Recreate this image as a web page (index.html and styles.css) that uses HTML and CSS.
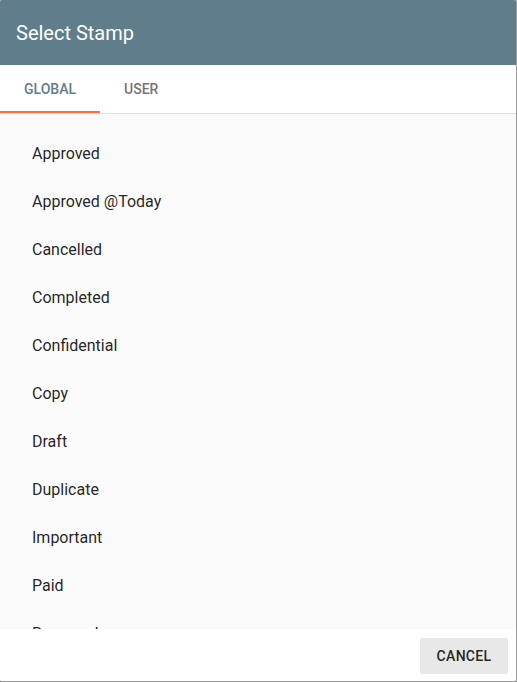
FILE: index.html
```html
<!DOCTYPE html>
<html>
<head>
<meta charset="utf-8">
<link rel="stylesheet" href="styles.css">
</head>
<body>
<div class="dialog">
  <div class="header">Select Stamp</div>
  <div class="tabs">
    <div class="tab active">GLOBAL</div>
    <div class="tab">USER</div>
  </div>
  <div class="content">
    <ul class="list">
      <li>Approved</li>
      <li>Approved @Today</li>
      <li>Cancelled</li>
      <li>Completed</li>
      <li>Confidential</li>
      <li>Copy</li>
      <li>Draft</li>
      <li>Duplicate</li>
      <li>Important</li>
      <li>Paid</li>
      <li>Removed</li>
    </ul>
  </div>
  <div class="footer">
    <button class="btn">CANCEL</button>
  </div>
</div>
</body>
</html>
```
FILE: styles.css
```css
html, body {
  margin: 0;
  padding: 0;
  background: #9a9a9a;
}
body {
  font-family: Roboto, "Liberation Sans", sans-serif;
  width: 517px;
  height: 682px;
  overflow: hidden;
}
.dialog {
  width: 516px;
  height: 681px;
  background: #fff;
  border-radius: 2px;
  overflow: hidden;
  display: flex;
  flex-direction: column;
}
.header {
  height: 65px;
  flex: none;
  background: #607d8b;
  color: #fff;
  font-size: 20px;
  line-height: 64px;
  padding-top: 1px;
  padding-left: 16px;
  box-sizing: border-box;
}
.tabs {
  display: flex;
  height: 49px;
  flex: none;
  border-bottom: 1px solid #e0e0e0;
  box-sizing: border-box;
}
.tab {
  padding: 2px 24px 0;
  font-size: 14px;
  font-weight: 500;
  color: #757575;
  line-height: 44px;
  border-bottom: 2px solid transparent;
  height: 48px;
  box-sizing: border-box;
}
.tab.active {
  color: #607d8b;
  border-bottom-color: #ff6e40;
  min-width: 100px;
}
.content {
  flex: 1;
  background: #fafafa;
  overflow: hidden;
  padding: 16px 16px 0;
  min-height: 0;
}
.list {
  list-style: none;
  margin: 0;
  padding: 0;
}
.list li {
  height: 48px;
  line-height: 48px;
  padding-left: 16px;
  font-size: 16px;
  color: rgba(0,0,0,0.87);
}
.footer {
  flex: none;
  height: 52px;
  background: #fff;
  display: flex;
  justify-content: flex-end;
  align-items: center;
  padding-right: 8px;
  padding-top: 1px;
  box-sizing: border-box;
}
.btn {
  font-family: Roboto, "Liberation Sans", sans-serif;
  background: #e8e8e8;
  border: none;
  border-radius: 2px;
  height: 36px;
  width: 88px;
  font-size: 14px;
  font-weight: 500;
  color: rgba(0,0,0,0.87);
  letter-spacing: 0.3px;
}
```
